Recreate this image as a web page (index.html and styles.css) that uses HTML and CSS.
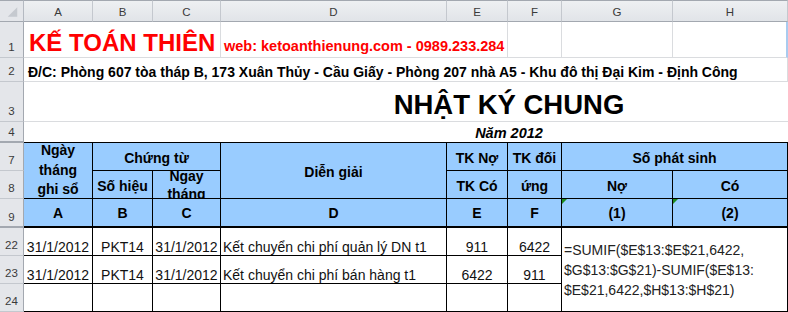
FILE: index.html
```html
<!DOCTYPE html>
<html lang="vi">
<head>
<meta charset="utf-8">
<title>Nhật ký chung</title>
<link rel="stylesheet" href="styles.css">
</head>
<body>
<div class="sheet">
  <div class="corner"><svg width="24" height="21" viewBox="0 0 24 21"><polygon points="18,6 18,16 8,16" fill="#c5c9cf"/></svg></div>
  <div class="ch">A</div><div class="ch">B</div><div class="ch">C</div><div class="ch">D</div><div class="ch">E</div><div class="ch">F</div><div class="ch">G</div><div class="ch">H</div>

  <div class="rh">1</div>
  <div class="c span3 title">KẾ TOÁN THIÊN</div>
  <div class="c span2 web">web: ketoanthienung.com - 0989.233.284</div>
  <div class="c"></div>
  <div class="c"></div>
  <div class="c sel"></div>

  <div class="rh">2</div>
  <div class="c span8 addr">Đ/C: Phòng 607 tòa tháp B, 173 Xuân Thủy - Cầu Giấy - Phòng 207 nhà A5 - Khu đô thị Đại Kim - Định Công</div>

  <div class="rh">3</div>
  <div class="c span8 noright heading">NHẬT KÝ CHUNG</div>

  <div class="rh hid">4</div>
  <div class="c span8 year">Năm 2012</div>

  <div class="rh">7</div>
  <div class="t rows2 wrap">Ngày<br>tháng<br>ghi sổ</div>
  <div class="t span2">Chứng từ</div>
  <div class="t rows2">Diễn giải</div>
  <div class="t">TK Nợ</div>
  <div class="t">TK đối</div>
  <div class="t span2">Số phát sinh</div>

  <div class="rh">8</div>
  <div class="t">Số hiệu</div>
  <div class="t wrap2">Ngay<br>tháng</div>
  <div class="t">TK Có</div>
  <div class="t">ứng</div>
  <div class="t">Nợ</div>
  <div class="t">Có</div>

  <div class="rh hid">9</div>
  <div class="t last">A</div>
  <div class="t last">B</div>
  <div class="t last">C</div>
  <div class="t last">D</div>
  <div class="t last">E</div>
  <div class="t last">F</div>
  <div class="t last flag">(1)</div>
  <div class="t last flag">(2)</div>

  <div class="rh">22</div>
  <div class="d">31/1/2012</div>
  <div class="d">PKT14</div>
  <div class="d">31/1/2012</div>
  <div class="d left">Kết chuyển chi phí quản lý DN t1</div>
  <div class="d">911</div>
  <div class="d">6422</div>
  <div class="d formula">=SUMIF($E$13:$E$21,6422,<br>$G$13:$G$21)-SUMIF($E$13:<br>$E$21,6422,$H$13:$H$21)</div>

  <div class="rh">23</div>
  <div class="d">31/1/2012</div>
  <div class="d">PKT14</div>
  <div class="d">31/1/2012</div>
  <div class="d left">Kết chuyển chi phí bán hàng t1</div>
  <div class="d">6422</div>
  <div class="d">911</div>

  <div class="rh">24</div>
  <div class="d"></div>
  <div class="d"></div>
  <div class="d"></div>
  <div class="d"></div>
  <div class="d"></div>
  <div class="d"></div>
</div>
</body>
</html>
```

FILE: styles.css
```css
* { box-sizing: border-box; }
html, body { margin: 0; padding: 0; background: #fff; }
body { font-family: "Liberation Sans", Arial, sans-serif; color: #000; }

.sheet {
  display: grid;
  width: 788px;
  grid-template-columns: 24px 69px 60px 68px 226px 61px 54px 111px 115px;
  grid-template-rows: 22px 36px 24px 40px 21px 28px 28px 29px 28px 28px 28px;
}

.corner {
  background: #e4e6ea;
  border-top: 1px solid #a3a8b0;
  border-right: 1px solid #b4b9c1;
  border-bottom: 1px solid #a3a8b0;
  display: flex;
}
.corner svg { display: block; }

.ch {
  background: linear-gradient(#eef0f2, #e1e4e8);
  border-top: 1px solid #a3a8b0;
  border-right: 1px solid #c4c8ce;
  border-bottom: 1px solid #a3a8b0;
  font-size: 11.5px;
  color: #3a3a3a;
  display: flex;
  align-items: center;
  justify-content: center;
  padding-top: 1px;
}

.rh {
  background: #e4e6ea;
  border-right: 1px solid #a3a8b0;
  border-bottom: 1px solid #c4c8ce;
  font-size: 11.5px;
  color: #3a3a3a;
  display: flex;
  align-items: flex-end;
  justify-content: center;
  padding-bottom: 3px;
  line-height: 14px;
}
.rh.hid { border-bottom: 2px solid #a3a8b0; padding-bottom: 2px; }

.c {
  border-right: 1px solid #dadcdf;
  border-bottom: 1px solid #dadcdf;
  display: flex;
  align-items: flex-end;
  white-space: nowrap;
}
.span2 { grid-column: span 2; }
.span3 { grid-column: span 3; }
.span8 { grid-column: span 8; }
.rows2 { grid-row: span 2; }
.noright { border-right: none; }
.sel { border-right: 2px solid #a9cbef; }

.title {
  color: #ff0000;
  font-weight: bold;
  font-size: 24px;
  line-height: 28px;
  padding-left: 5px;
}
.web {
  color: #ff0000;
  font-weight: bold;
  font-size: 14.5px;
  line-height: 17px;
  padding-left: 3px;
  padding-bottom: 2px;
}
.addr {
  font-weight: bold;
  font-size: 14px;
  line-height: 16px;
  padding-left: 4px;
  padding-bottom: 1px;
}
.heading {
  font-weight: bold;
  font-size: 27.5px;
  line-height: 32px;
  justify-content: center;
  padding-left: 206px;
}
.year {
  font-weight: bold;
  font-style: italic;
  font-size: 14.5px;
  line-height: 17px;
  justify-content: center;
  padding-left: 206px;
  border-right: none;
  border-bottom: 1px solid #000;
}

.t {
  position: relative;
  background: #99ccff;
  border-right: 1px solid #000;
  border-bottom: 1px solid #000;
  display: flex;
  align-items: center;
  justify-content: center;
  text-align: center;
  font-weight: bold;
  font-size: 14px;
  line-height: 16px;
  overflow: hidden;
  white-space: nowrap;
  padding-top: 2px;
}
.t.wrap { line-height: 19.5px; padding-top: 0; }
.t.wrap2 { line-height: 18px; padding-top: 0; }
.t.last { border-bottom: 2px solid #000; padding-top: 1px; }
.t.flag::before {
  content: "";
  position: absolute;
  left: 0;
  top: 0;
  border-top: 5px solid #1e8a1e;
  border-right: 5px solid transparent;
}

.d {
  border-right: 1px solid #000;
  border-bottom: 1px solid #000;
  display: flex;
  align-items: flex-end;
  justify-content: center;
  font-size: 14px;
  line-height: 16px;
  white-space: nowrap;
  color: #111;
}
.d.left { justify-content: flex-start; padding-left: 2px; }
.d.formula {
  grid-column: span 2;
  grid-row: span 3;
  justify-content: flex-start;
  align-items: center;
  padding-left: 2px;
  line-height: 20px;
  color: #222;
}
```
